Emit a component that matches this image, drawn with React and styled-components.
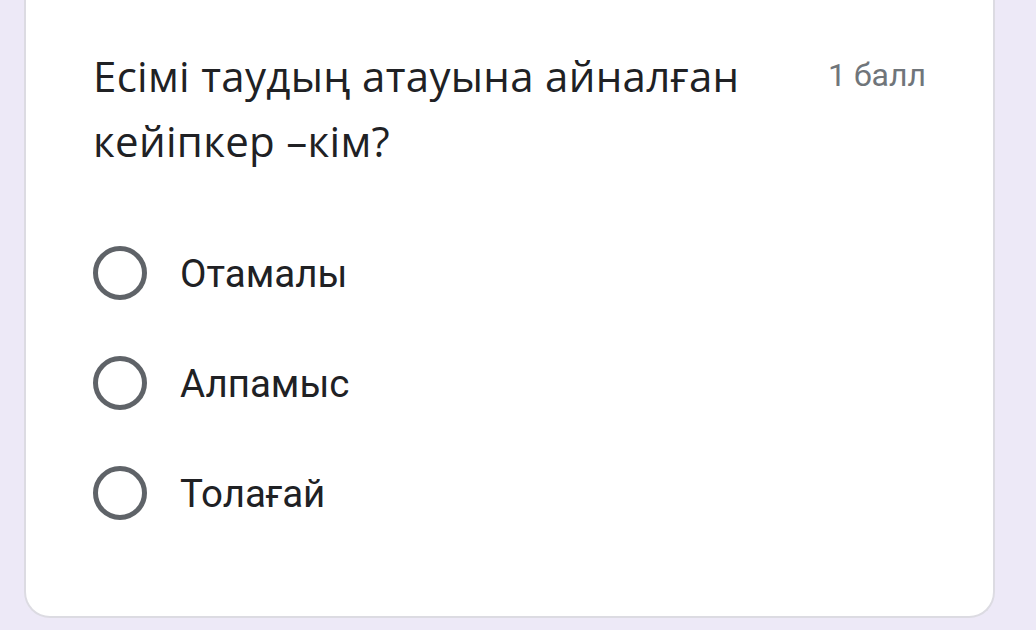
import React from 'react';
import styled, { createGlobalStyle } from 'styled-components';

const GlobalStyle = createGlobalStyle`
    html, body {
        margin: 0;
        padding: 0;
        background: #ede9f7;
        height: 630px;
        overflow: hidden;
    }
`;

const Page = styled.div`
    width: 1036px;
    height: 630px;
    box-sizing: border-box;
    padding: 0 41px 12px 24px;
    display: flex;
    flex-direction: column;
    justify-content: flex-end;
`;

const Card = styled.div`
    background: #fff;
    border: 2px solid #dcdbe2;
    border-top: none;
    border-radius: 0 0 26px 26px;
    height: 640px;
    box-sizing: border-box;
    padding: 0 67px 96px 67px;
    display: flex;
    flex-direction: column;
    justify-content: flex-end;
`;

const Header = styled.div`
    display: flex;
    justify-content: space-between;
    align-items: flex-start;
    margin-bottom: 73px;
`;

const Question = styled.div`
    font-family: "Open Sans", "Noto Sans", sans-serif;
    font-size: 42px;
    line-height: 65px;
    color: #202124;
    max-width: 690px;
    letter-spacing: 0.3px;
`;

const Points = styled.div`
    font-family: Roboto, "Noto Sans", sans-serif;
    font-size: 32px;
    line-height: 65px;
    color: #70757a;
`;

const Options = styled.div`
    display: flex;
    flex-direction: column;
    gap: 56px;
`;

const Option = styled.label`
    display: flex;
    align-items: center;
    gap: 33px;
    height: 54px;
    font-family: Roboto, "Noto Sans", sans-serif;
    font-size: 38.5px;
    color: #202124;
`;

const Radio = styled.span`
    width: 54px;
    height: 54px;
    box-sizing: border-box;
    border: 5px solid #5f6368;
    border-radius: 50%;
    flex-shrink: 0;
`;

const options = ['Отамалы', 'Алпамыс', 'Толағай'];

export default function App() {
    return (
        <Page>
            <GlobalStyle />
            <Card>
                <Header>
                    <Question>Есімі таудың атауына айналған кейіпкер –кім?</Question>
                    <Points>1 балл</Points>
                </Header>
                <Options>
                    {options.map((o) => (
                        <Option key={o}>
                            <Radio />
                            {o}
                        </Option>
                    ))}
                </Options>
            </Card>
        </Page>
    );
}
